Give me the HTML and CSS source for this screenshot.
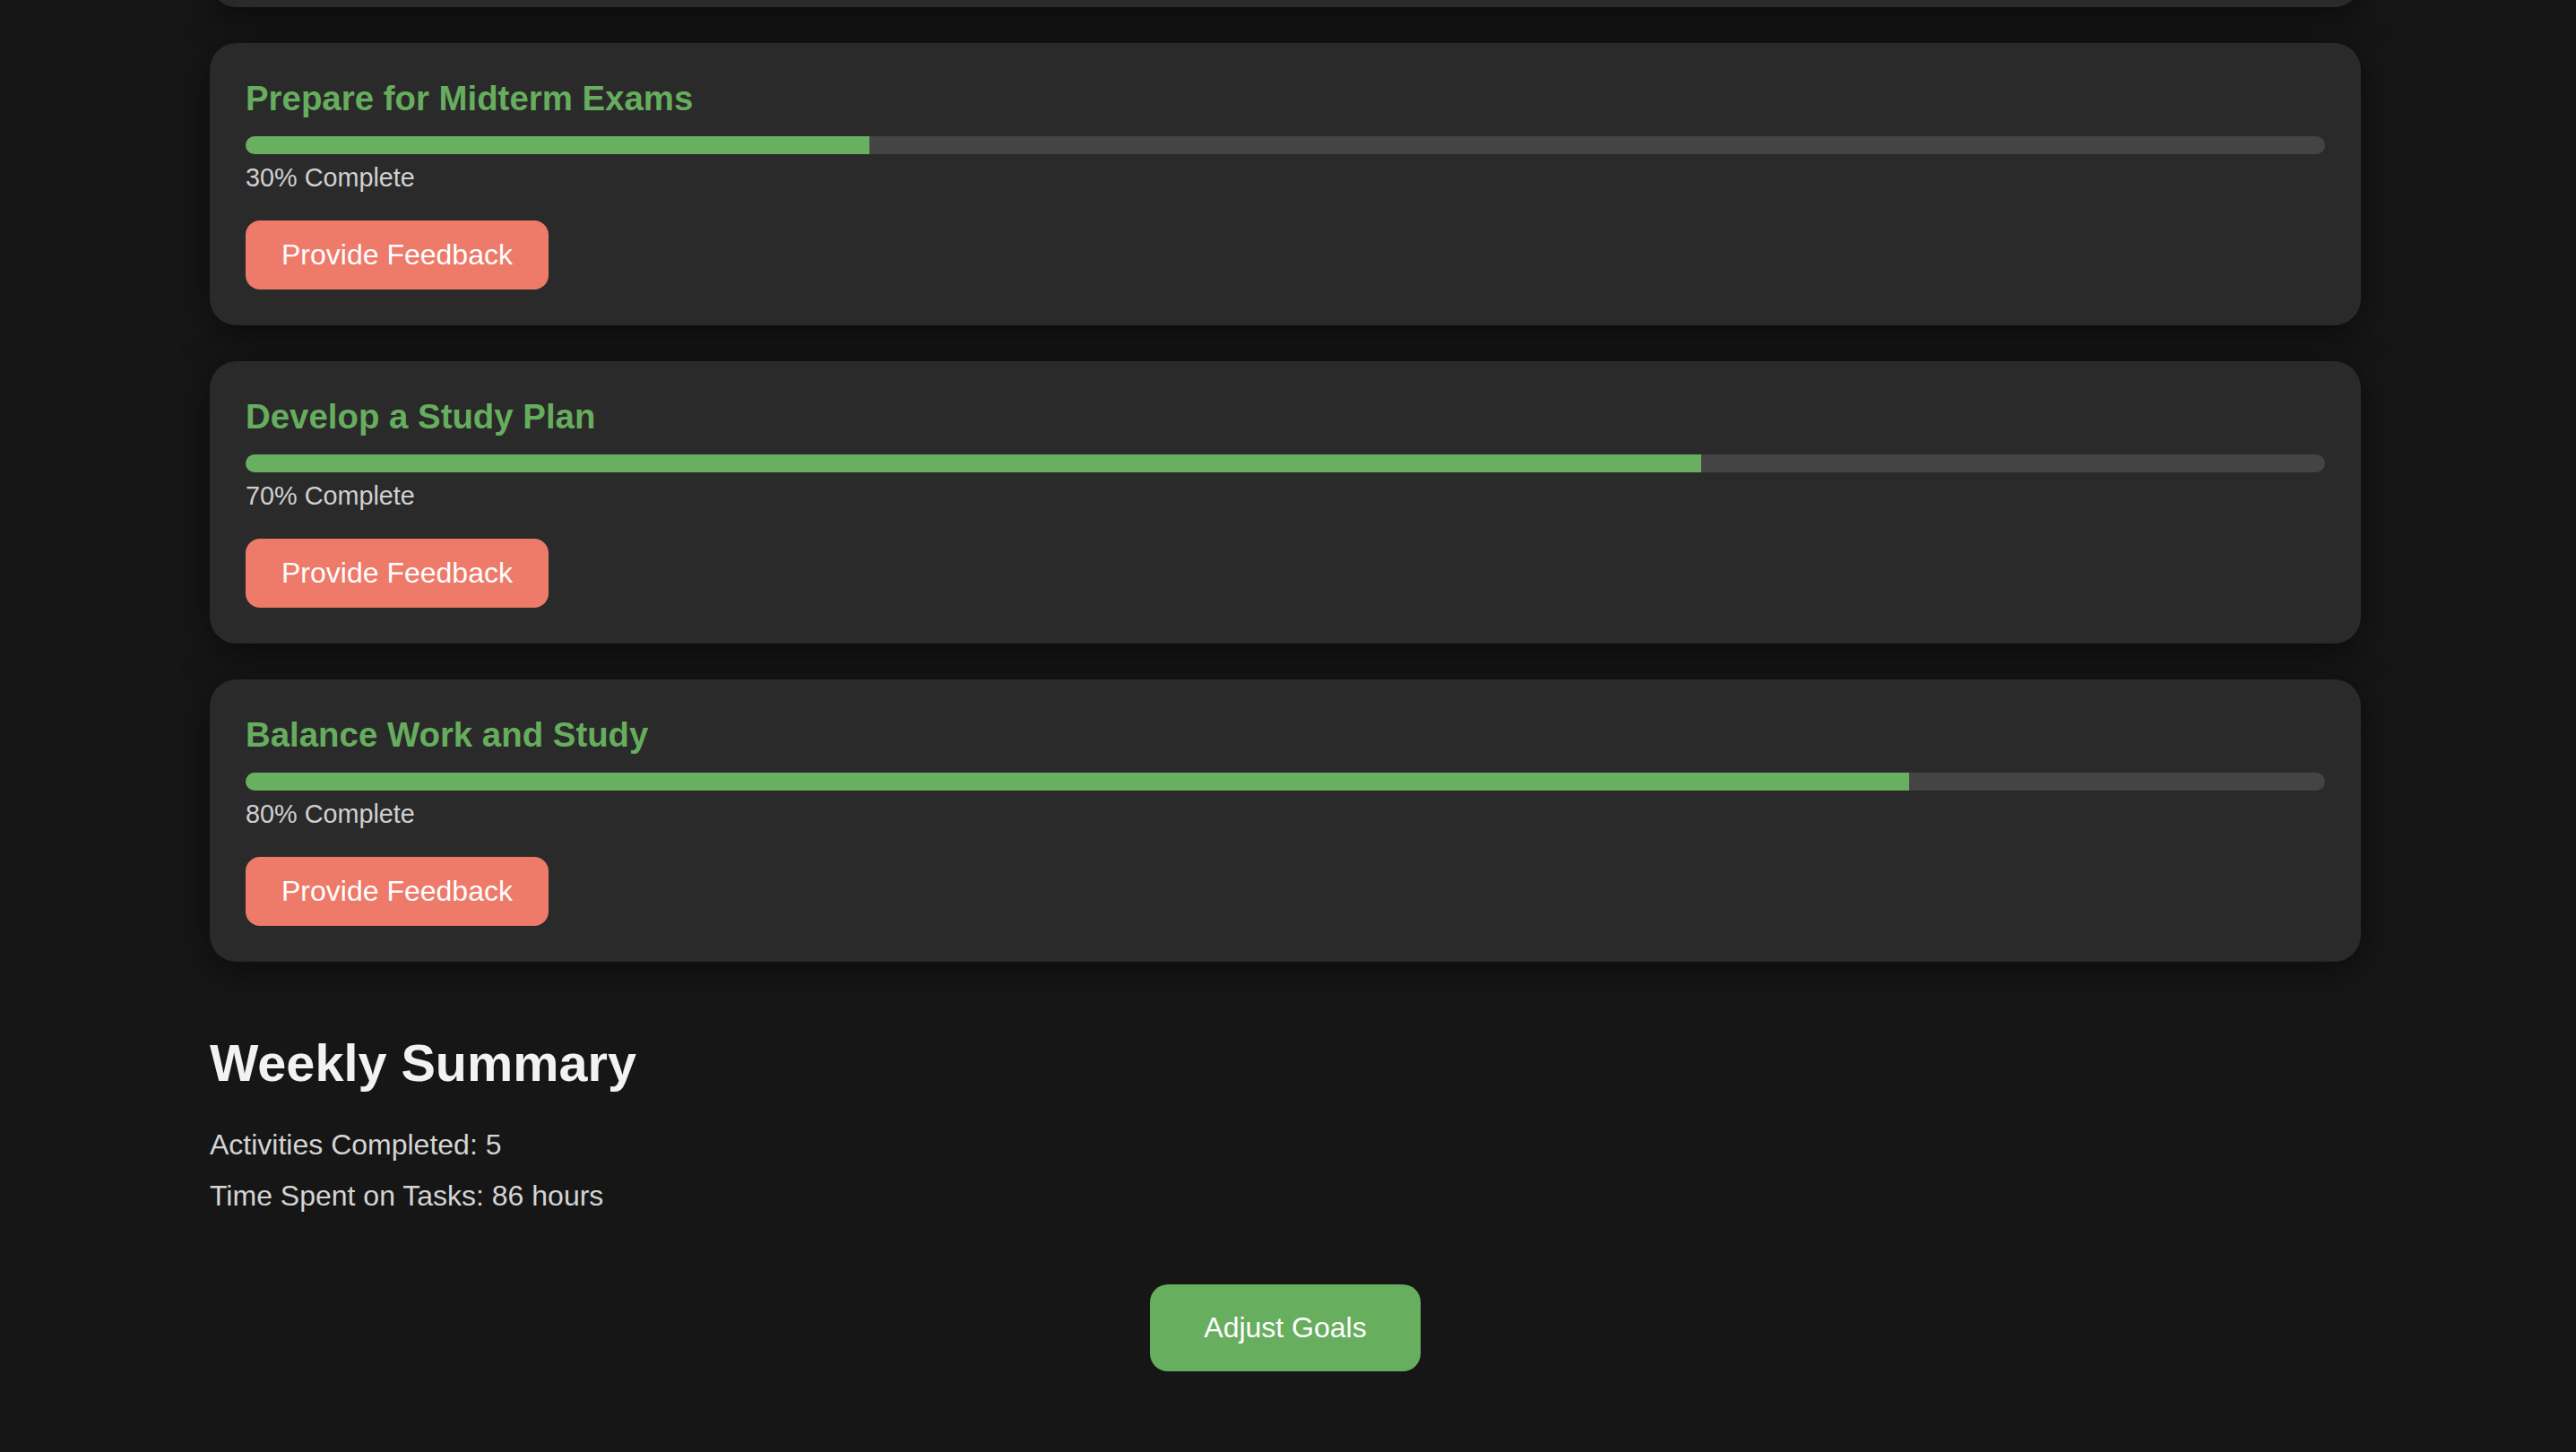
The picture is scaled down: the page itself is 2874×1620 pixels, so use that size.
FILE: index.html
```html
<!DOCTYPE html>
<html lang="en">
<head>
<meta charset="utf-8">
<title>Goals Progress</title>
<link rel="stylesheet" href="styles.css">
</head>
<body>
<main class="page">
  <section class="goals">
    <div class="card card-cut"></div>

    <article class="card">
      <h3 class="goal-title">Prepare for Midterm Exams</h3>
      <div class="track"><div class="fill" style="width: 30%"></div></div>
      <p class="goal-status">30% Complete</p>
      <button class="btn-feedback">Provide Feedback</button>
    </article>

    <article class="card">
      <h3 class="goal-title">Develop a Study Plan</h3>
      <div class="track"><div class="fill" style="width: 70%"></div></div>
      <p class="goal-status">70% Complete</p>
      <button class="btn-feedback">Provide Feedback</button>
    </article>

    <article class="card">
      <h3 class="goal-title">Balance Work and Study</h3>
      <div class="track"><div class="fill" style="width: 80%"></div></div>
      <p class="goal-status">80% Complete</p>
      <button class="btn-feedback">Provide Feedback</button>
    </article>
  </section>

  <section class="summary">
    <h2 class="summary-title">Weekly Summary</h2>
    <p class="summary-line">Activities Completed: 5</p>
    <p class="summary-line">Time Spent on Tasks: 86 hours</p>
  </section>

  <div class="actions">
    <button class="btn-adjust">Adjust Goals</button>
  </div>
</main>
</body>
</html>
```

FILE: styles.css
```css
* {
  box-sizing: border-box;
}

html, body {
  margin: 0;
  padding: 0;
}

body {
  background: #161616;
  font-family: "Liberation Sans", Arial, Helvetica, sans-serif;
  color: #cfcfcf;
  padding-right: 6px;
  overflow: hidden;
  height: 1620px;
}

.page {
  max-width: 2400px;
  margin: 0 auto;
}

.goals {
  display: flex;
  flex-direction: column;
  gap: 40px;
}

.card {
  background: #2a2a2a;
  border-radius: 30px;
  padding: 40px;
  box-shadow: 0 8px 40px rgba(0, 0, 0, 0.5);
}

.card-cut {
  height: 315px;
  margin-top: -307px;
}

.goal-title {
  margin: 0 0 20px;
  font-size: 38.4px;
  line-height: 44px;
  font-weight: 700;
  color: #66ad5e;
}

.track {
  height: 20px;
  background: #444444;
  border-radius: 10px;
  overflow: hidden;
  margin-bottom: 10px;
}

.fill {
  height: 100%;
  background: #68af5f;
}

.goal-status {
  margin: 0 0 31px;
  font-size: 28.8px;
  line-height: 33px;
  color: #d0d0d0;
}

.btn-feedback {
  display: block;
  border: none;
  background: #ee7a6a;
  color: #ffffff;
  font-family: "Liberation Sans", Arial, Helvetica, sans-serif;
  font-size: 32px;
  line-height: 37px;
  padding: 20px 40px;
  border-radius: 16px;
  cursor: pointer;
}

.summary {
  margin-top: 81px;
}

.summary-title {
  margin: 0 0 40px;
  font-size: 57.6px;
  line-height: 65px;
  font-weight: 700;
  color: #f2f2f2;
}

.summary-line {
  margin: 0 0 20px;
  font-size: 32px;
  line-height: 37px;
  color: #d4d4d4;
}

.summary-line:last-child {
  margin-bottom: 0;
}

.actions {
  display: flex;
  justify-content: center;
  margin-top: 80px;
}

.btn-adjust {
  border: none;
  background: #68ae5f;
  color: #ffffff;
  font-family: "Liberation Sans", Arial, Helvetica, sans-serif;
  font-size: 32px;
  line-height: 37px;
  padding: 30px 60px;
  border-radius: 20px;
  cursor: pointer;
}
```
